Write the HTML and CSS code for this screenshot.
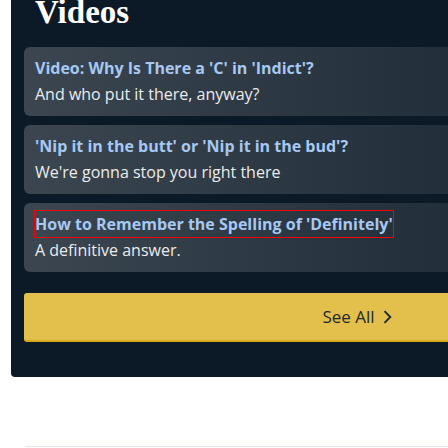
FILE: index.html
```html
<!DOCTYPE html>
<html lang="en">
<head>
<meta charset="utf-8">
<title>Videos</title>
<link rel="stylesheet" href="styles.css">
</head>
<body>
<section class="panel">
  <h2 class="heading">Videos</h2>
  <ul class="list">
    <li class="card">
      <a class="card-title" href="#">Video: Why Is There a 'C' in 'Indict'?</a>
      <p class="card-sub">And who put it there, anyway?</p>
    </li>
    <li class="card">
      <a class="card-title" href="#">'Nip it in the butt' or 'Nip it in the bud'?</a>
      <p class="card-sub">We're gonna stop you right there</p>
    </li>
    <li class="card">
      <a class="card-title is-focused" href="#">How to Remember the Spelling of 'Definitely'</a>
      <p class="card-sub">A definitive answer.</p>
    </li>
  </ul>
  <a class="see-all" href="#">See All
    <svg class="chev" width="9" height="14" viewBox="0 0 9 14" aria-hidden="true"><path d="M1.5 1.2 L7.3 7 L1.5 12.8" fill="none" stroke="#1f2830" stroke-width="1.9"/></svg>
  </a>
</section>
<div class="rule"></div>
</body>
</html>
```
FILE: styles.css
```css
html, body {
  margin: 0;
  padding: 0;
  background: #ffffff;
  overflow: hidden;
}
body {
  width: 448px;
  height: 448px;
}
.panel {
  margin-left: 11px;
  width: 692px;
  box-sizing: border-box;
  padding: 0 13px 35px;
  background: #0c1a27;
  border-radius: 0 0 4px 4px;
}
.heading {
  margin: -4px 0 18px;
  padding-left: 11px;
  font-family: "Liberation Serif", serif;
  font-weight: 700;
  font-size: 33px;
  line-height: 33px;
  color: #ffffff;
}
.list {
  list-style: none;
  margin: 0;
  padding: 0;
  display: flex;
  flex-direction: column;
  gap: 9px;
}
.card {
  padding: 8px 11px 8px;
  border-radius: 6px;
  background: linear-gradient(90deg, #3b4651 0, #222e39 424px, #1a2530 100%);
  font-family: "Open Sans", sans-serif;
}
.card-title {
  display: inline-block;
  font-weight: 700;
  font-size: 16px;
  line-height: 26px;
  color: #a6c8f2;
  text-decoration: none;
}
.card-title.is-focused {
  outline: 1px solid #ff0000;
}
.card-sub {
  margin: 0;
  font-size: 16px;
  line-height: 27px;
  color: #ececec;
}
.see-all {
  margin-top: 21px;
  height: 49px;
  box-sizing: border-box;
  display: flex;
  align-items: center;
  justify-content: center;
  gap: 8px;
  background: #e3bf4b;
  border-bottom: 2px solid #d6a916;
  border-radius: 3px;
  font-family: "Open Sans", sans-serif;
  font-size: 17px;
  font-weight: 500;
  color: #1f2830;
  text-decoration: none;
}
.chev {
  display: block;
}
.rule {
  margin: 69px 0 0 25px;
  border-top: 1px solid #e3e9ee;
}
```
